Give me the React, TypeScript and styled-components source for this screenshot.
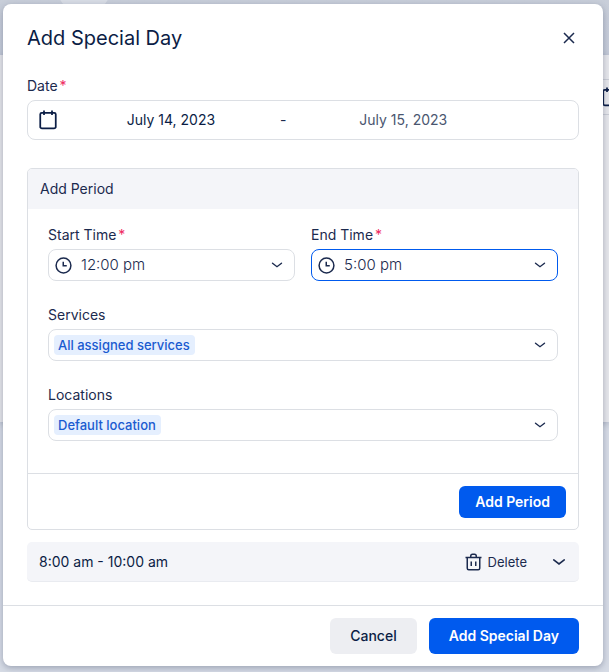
import React from "react";
import styled, { createGlobalStyle, css } from "styled-components";

const color = {
  ink: "#1b2a4e",
  deep: "#0b1d45",
  soft: "#4a566f",
  line: "#dcdfe4",
  tint: "#f4f5f9",
  blue: "#005aee",
  required: "#ee2a60",
};

const GlobalStyle = createGlobalStyle`
  *, *::before, *::after { box-sizing: border-box; }
  body {
    margin: 0;
    color: ${color.ink};
    font: 400 14px/20px Inter, "Open Sans", sans-serif;
  }
  button, input, select { font: inherit; color: inherit; margin: 0; }
`;

const Screen = styled.div`
  display: grid;
  min-height: 100vh;
  overflow: hidden;
  > * { grid-area: 1 / 1; }
`;

const Backdrop = styled.div`
  display: grid;
  grid-template-rows: 55px 367px 1fr;
  min-width: 0;
  overflow: hidden;
  background: #d6dbe5;
`;

const BackdropBanner = styled.div`
  padding-left: 57px;
  overflow: hidden;
  background: linear-gradient(#c8ced9, #c5cbd8);
`;

const BannerCircle = styled.div`
  width: 54px;
  height: 54px;
  margin-top: -40px;
  border-radius: 50%;
  background: #d8dde5;
`;

const BackdropCard = styled.div`
  display: flex;
  justify-content: flex-end;
  align-items: flex-start;
  padding-top: 24px;
  background: #e5e6ea;
  box-shadow: 0 2px 6px rgba(60, 70, 100, 0.25);
`;

const BackdropField = styled.div`
  display: flex;
  justify-content: flex-end;
  align-items: center;
  width: 40px;
  height: 36px;
  border: solid #c9ccd4;
  border-width: 1px 0;
  color: ${color.deep};
  svg { flex: none; margin-right: -11px; }
`;

const Dialog = styled.form`
  align-self: start;
  z-index: 1;
  margin: 4px 6px 6px 3px;
  min-width: 0;
  border-radius: 8px;
  background: #fff;
  box-shadow: 0 2px 6px rgba(50, 60, 90, 0.35);
`;

const DialogHeader = styled.header`
  display: flex;
  align-items: center;
  justify-content: space-between;
  padding: 20px 24px 0;
`;

const Title = styled.h1`
  margin: 0;
  font-size: 20px;
  font-weight: 400;
  line-height: 28px;
  color: ${color.deep};
`;

const IconButton = styled.button`
  display: flex;
  align-items: center;
  justify-content: center;
  width: 20px;
  height: 20px;
  padding: 0;
  border: 0;
  background: none;
  cursor: pointer;
`;

const DialogBody = styled.div`
  padding: 24px 24px 23px;
`;

const Label = styled.label`
  display: block;
  margin-bottom: 4px;
`;

const Required = styled.span`
  margin-left: 2px;
  color: ${color.required};
`;

const DateRange = styled.div`
  display: flex;
  align-items: center;
  height: 40px;
  padding: 0 11px;
  margin-bottom: 28px;
  border: 1px solid ${color.line};
  border-radius: 8px;
  svg { flex: none; margin-right: 11px; color: ${color.deep}; }
`;

const DateInput = styled.input<{ $muted?: boolean }>`
  width: 39%;
  min-width: 0;
  padding: 0;
  border: 0;
  outline: 0;
  background: none;
  text-align: center;
  color: ${(p) => (p.$muted ? color.soft : color.deep)};
`;

const DateSeparator = styled.span`
  width: 5%;
  padding-left: 6px;
`;

const Panel = styled.section`
  margin-bottom: 12px;
  overflow: hidden;
  border: 1px solid ${color.line};
  border-radius: 5px;
`;

const PanelTitle = styled.h2`
  margin: 0;
  padding: 10px 12px;
  font-size: 14px;
  font-weight: 400;
  background: ${color.tint};
`;

const PanelBody = styled.div`
  display: grid;
  grid-template-columns: 1fr 1fr;
  gap: 24px 16px;
  padding: 16px 20px 32px;
`;

const PanelFooter = styled.div`
  display: flex;
  justify-content: flex-end;
  padding: 12px 12px 11px;
  border-top: 1px solid ${color.line};
`;

const Field = styled.div<{ $wide?: boolean }>`
  grid-column: ${(p) => (p.$wide ? "1 / -1" : "auto")};
  min-width: 0;
`;

const SelectBox = styled.div<{ $active?: boolean; $tagged?: boolean }>`
  display: flex;
  align-items: center;
  justify-content: space-between;
  height: 32px;
  padding: 0 11px 0 ${(p) => (p.$tagged ? "5px" : "6px")};
  border: 1px solid ${(p) => (p.$active ? color.blue : color.line)};
  border-radius: 8px;
  svg { flex: none; }
`;

const plainSelect = css`
  appearance: none;
  border: 0;
  outline: 0;
  cursor: pointer;
`;

const TimeSelect = styled.select`
  ${plainSelect}
  flex: 1;
  min-width: 0;
  padding: 0 9px;
  font-size: 15px;
  font-weight: 300;
  background: none;
  color: ${color.ink};
`;

const TagSelect = styled.select`
  ${plainSelect}
  field-sizing: content;
  height: 20px;
  padding: 0 5px 0 4px;
  border-radius: 4px;
  font-size: 13px;
  font-weight: 500;
  background: #e5effe;
  color: #1a5bd0;
`;

const PeriodRow = styled.div`
  display: flex;
  align-items: center;
  height: 40px;
  padding: 0 10px 0 12px;
  border-bottom: 1px solid #e9ebf0;
  border-radius: 5px;
  background: ${color.tint};
`;

const PeriodTime = styled.span`
  flex: 1;
  color: ${color.deep};
`;

const DeleteButton = styled.button`
  display: flex;
  align-items: center;
  gap: 6px;
  margin-right: 22px;
  padding: 0;
  border: 0;
  font-size: 13px;
  background: none;
  cursor: pointer;
`;

const DialogFooter = styled.footer`
  display: flex;
  justify-content: flex-end;
  gap: 12px;
  padding: 12px 24px;
  border-top: 1px solid ${color.line};
`;

const Button = styled.button<{ $quiet?: boolean; $small?: boolean }>`
  height: ${(p) => (p.$small ? "32px" : "36px")};
  padding: 0 ${(p) => (p.$small ? "16px" : "20px")};
  border: 0;
  border-radius: 6px;
  font-weight: ${(p) => (p.$quiet ? 500 : 600)};
  white-space: nowrap;
  background: ${(p) => (p.$quiet ? "#edeef2" : color.blue)};
  color: ${(p) => (p.$quiet ? color.deep : "#fff")};
  cursor: pointer;
`;

const CalendarIcon = () => (
  <svg width="18" height="20" viewBox="0 0 18 20" fill="none" stroke="currentColor" strokeWidth="1.75" aria-hidden="true">
    <rect x="1.25" y="2.75" width="15.5" height="15.5" rx="1.5" />
    <path d="M5 0.5v4.5M13 0.5v4.5" />
  </svg>
);

const ClockIcon = () => (
  <svg width="17" height="17" viewBox="0 0 17 17" fill="none" stroke="currentColor" strokeWidth="1.5" aria-hidden="true">
    <circle cx="8.5" cy="8.5" r="7.4" />
    <path d="M8.25 4.75v4h3.5" />
  </svg>
);

const ChevronIcon = ({ size = 12 }: { size?: number }) => (
  <svg width={size} height={size} viewBox="0 0 12 12" fill="none" stroke="currentColor" strokeWidth="1.4" strokeLinecap="round" aria-hidden="true">
    <path d="M1.5 4.2 6 7.7 10.5 4.2" />
  </svg>
);

const CloseIcon = () => (
  <svg width="12" height="12" viewBox="0 0 12 12" fill="none" stroke="currentColor" strokeWidth="1.5" aria-hidden="true">
    <path d="M1 1l10 10M11 1 1 11" />
  </svg>
);

const TrashIcon = () => (
  <svg width="17" height="18" viewBox="0 0 17 18" fill="none" stroke="currentColor" strokeWidth="1.5" aria-hidden="true">
    <path d="M0.5 4.5h16M2.25 4.5v10.75q0 1.5 1.5 1.5h9.5q1.5 0 1.5-1.5V4.5M5.75 4.5V3q0-1.75 1.75-1.75h2Q11.25 1.25 11.25 3v1.5M6.25 8.5v4.5M10.75 8.5v4.5" />
  </svg>
);

const TimeField = ({ id, label, value, active }: { id: string; label: string; value: string; active?: boolean }) => (
  <Field>
    <Label htmlFor={id}>
      {label}
      <Required>*</Required>
    </Label>
    <SelectBox $active={active}>
      <ClockIcon />
      <TimeSelect id={id} defaultValue={value}>
        <option>{value}</option>
      </TimeSelect>
      <ChevronIcon />
    </SelectBox>
  </Field>
);

const TagField = ({ id, label, value }: { id: string; label: string; value: string }) => (
  <Field $wide>
    <Label htmlFor={id}>{label}</Label>
    <SelectBox $tagged>
      <TagSelect id={id} defaultValue={value}>
        <option>{value}</option>
      </TagSelect>
      <ChevronIcon />
    </SelectBox>
  </Field>
);

export default function App() {
  return (
    <>
      <GlobalStyle />
      <Screen>
        <Backdrop aria-hidden="true">
          <BackdropBanner>
            <BannerCircle />
          </BackdropBanner>
          <BackdropCard>
            <BackdropField>
              <CalendarIcon />
            </BackdropField>
          </BackdropCard>
        </Backdrop>
        <Dialog role="dialog" aria-labelledby="dialog-title" onSubmit={(e) => e.preventDefault()}>
          <DialogHeader>
            <Title id="dialog-title">Add Special Day</Title>
            <IconButton type="button" aria-label="Close">
              <CloseIcon />
            </IconButton>
          </DialogHeader>
          <DialogBody>
            <Label htmlFor="date-from">
              Date<Required>*</Required>
            </Label>
            <DateRange>
              <CalendarIcon />
              <DateInput id="date-from" defaultValue="July 14, 2023" />
              <DateSeparator>-</DateSeparator>
              <DateInput $muted aria-label="End date" defaultValue="July 15, 2023" />
            </DateRange>
            <Panel>
              <PanelTitle>Add Period</PanelTitle>
              <PanelBody>
                <TimeField id="start-time" label="Start Time" value="12:00 pm" />
                <TimeField id="end-time" label="End Time" value="5:00 pm" active />
                <TagField id="services" label="Services" value="All assigned services" />
                <TagField id="locations" label="Locations" value="Default location" />
              </PanelBody>
              <PanelFooter>
                <Button type="button" $small>Add Period</Button>
              </PanelFooter>
            </Panel>
            <PeriodRow>
              <PeriodTime>8:00 am - 10:00 am</PeriodTime>
              <DeleteButton type="button">
                <TrashIcon />
                Delete
              </DeleteButton>
              <IconButton type="button" aria-label="Expand period">
                <ChevronIcon size={14} />
              </IconButton>
            </PeriodRow>
          </DialogBody>
          <DialogFooter>
            <Button type="button" $quiet>Cancel</Button>
            <Button type="submit">Add Special Day</Button>
          </DialogFooter>
        </Dialog>
      </Screen>
    </>
  );
}
